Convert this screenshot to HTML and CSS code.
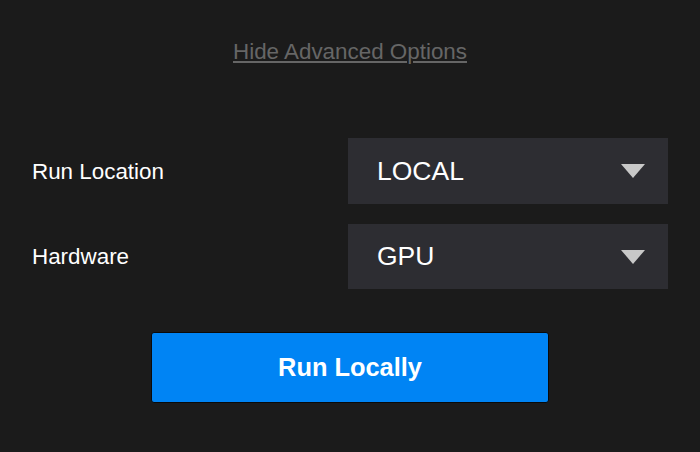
FILE: index.html
```html
<!DOCTYPE html>
<html>
<head>
<meta charset="utf-8">
<link rel="stylesheet" href="styles.css">
</head>
<body>
<div class="panel">
  <div class="toggle-row"><a class="toggle" href="#">Hide Advanced Options</a></div>
  <div class="fields">
    <div class="field">
      <span class="label">Run Location</span>
      <div class="select"><span class="value">LOCAL</span><span class="caret"></span></div>
    </div>
    <div class="field">
      <span class="label">Hardware</span>
      <div class="select"><span class="value">GPU</span><span class="caret"></span></div>
    </div>
  </div>
  <div class="actions">
    <button class="run">Run Locally</button>
  </div>
</div>
</body>
</html>
```
FILE: styles.css
```css
html, body {
  margin: 0;
  padding: 0;
  background: #1b1b1b;
  height: 100%;
}
body {
  font-family: "Liberation Sans", Arial, sans-serif;
  color: #ffffff;
}
.panel {
  padding: 39px 32px 0 32px;
}
.toggle-row {
  text-align: center;
  font-size: 22.4px;
  line-height: 25px;
}
.toggle {
  color: #666666;
  text-decoration: underline;
  text-underline-offset: 2px;
}
.fields {
  margin-top: 74px;
  display: flex;
  flex-direction: column;
  gap: 20px;
}
.field {
  display: flex;
  align-items: center;
  justify-content: space-between;
}
.label {
  font-size: 22.4px;
  line-height: 25px;
  padding-top: 1px;
}
.select {
  width: 320px;
  height: 65.5px;
  box-sizing: border-box;
  background: #2d2d32;
  display: flex;
  align-items: center;
  justify-content: space-between;
  padding: 0 23px 0 29px;
}
.value {
  font-size: 26.5px;
  line-height: 30px;
}
.caret {
  width: 0;
  height: 0;
  border-left: 12px solid transparent;
  border-right: 12px solid transparent;
  border-top: 14px solid #c8c8c8;
  margin-top: 1px;
}
.actions {
  display: flex;
  justify-content: center;
  margin-top: 43px;
}
.run {
  width: 398px;
  height: 71px;
  background: #0084f4;
  border: 1px solid #0a0a0a;
  border-radius: 3px;
  color: #ffffff;
  font-family: "Liberation Sans", Arial, sans-serif;
  font-weight: bold;
  font-size: 25.4px;
  padding: 0;
}
```
